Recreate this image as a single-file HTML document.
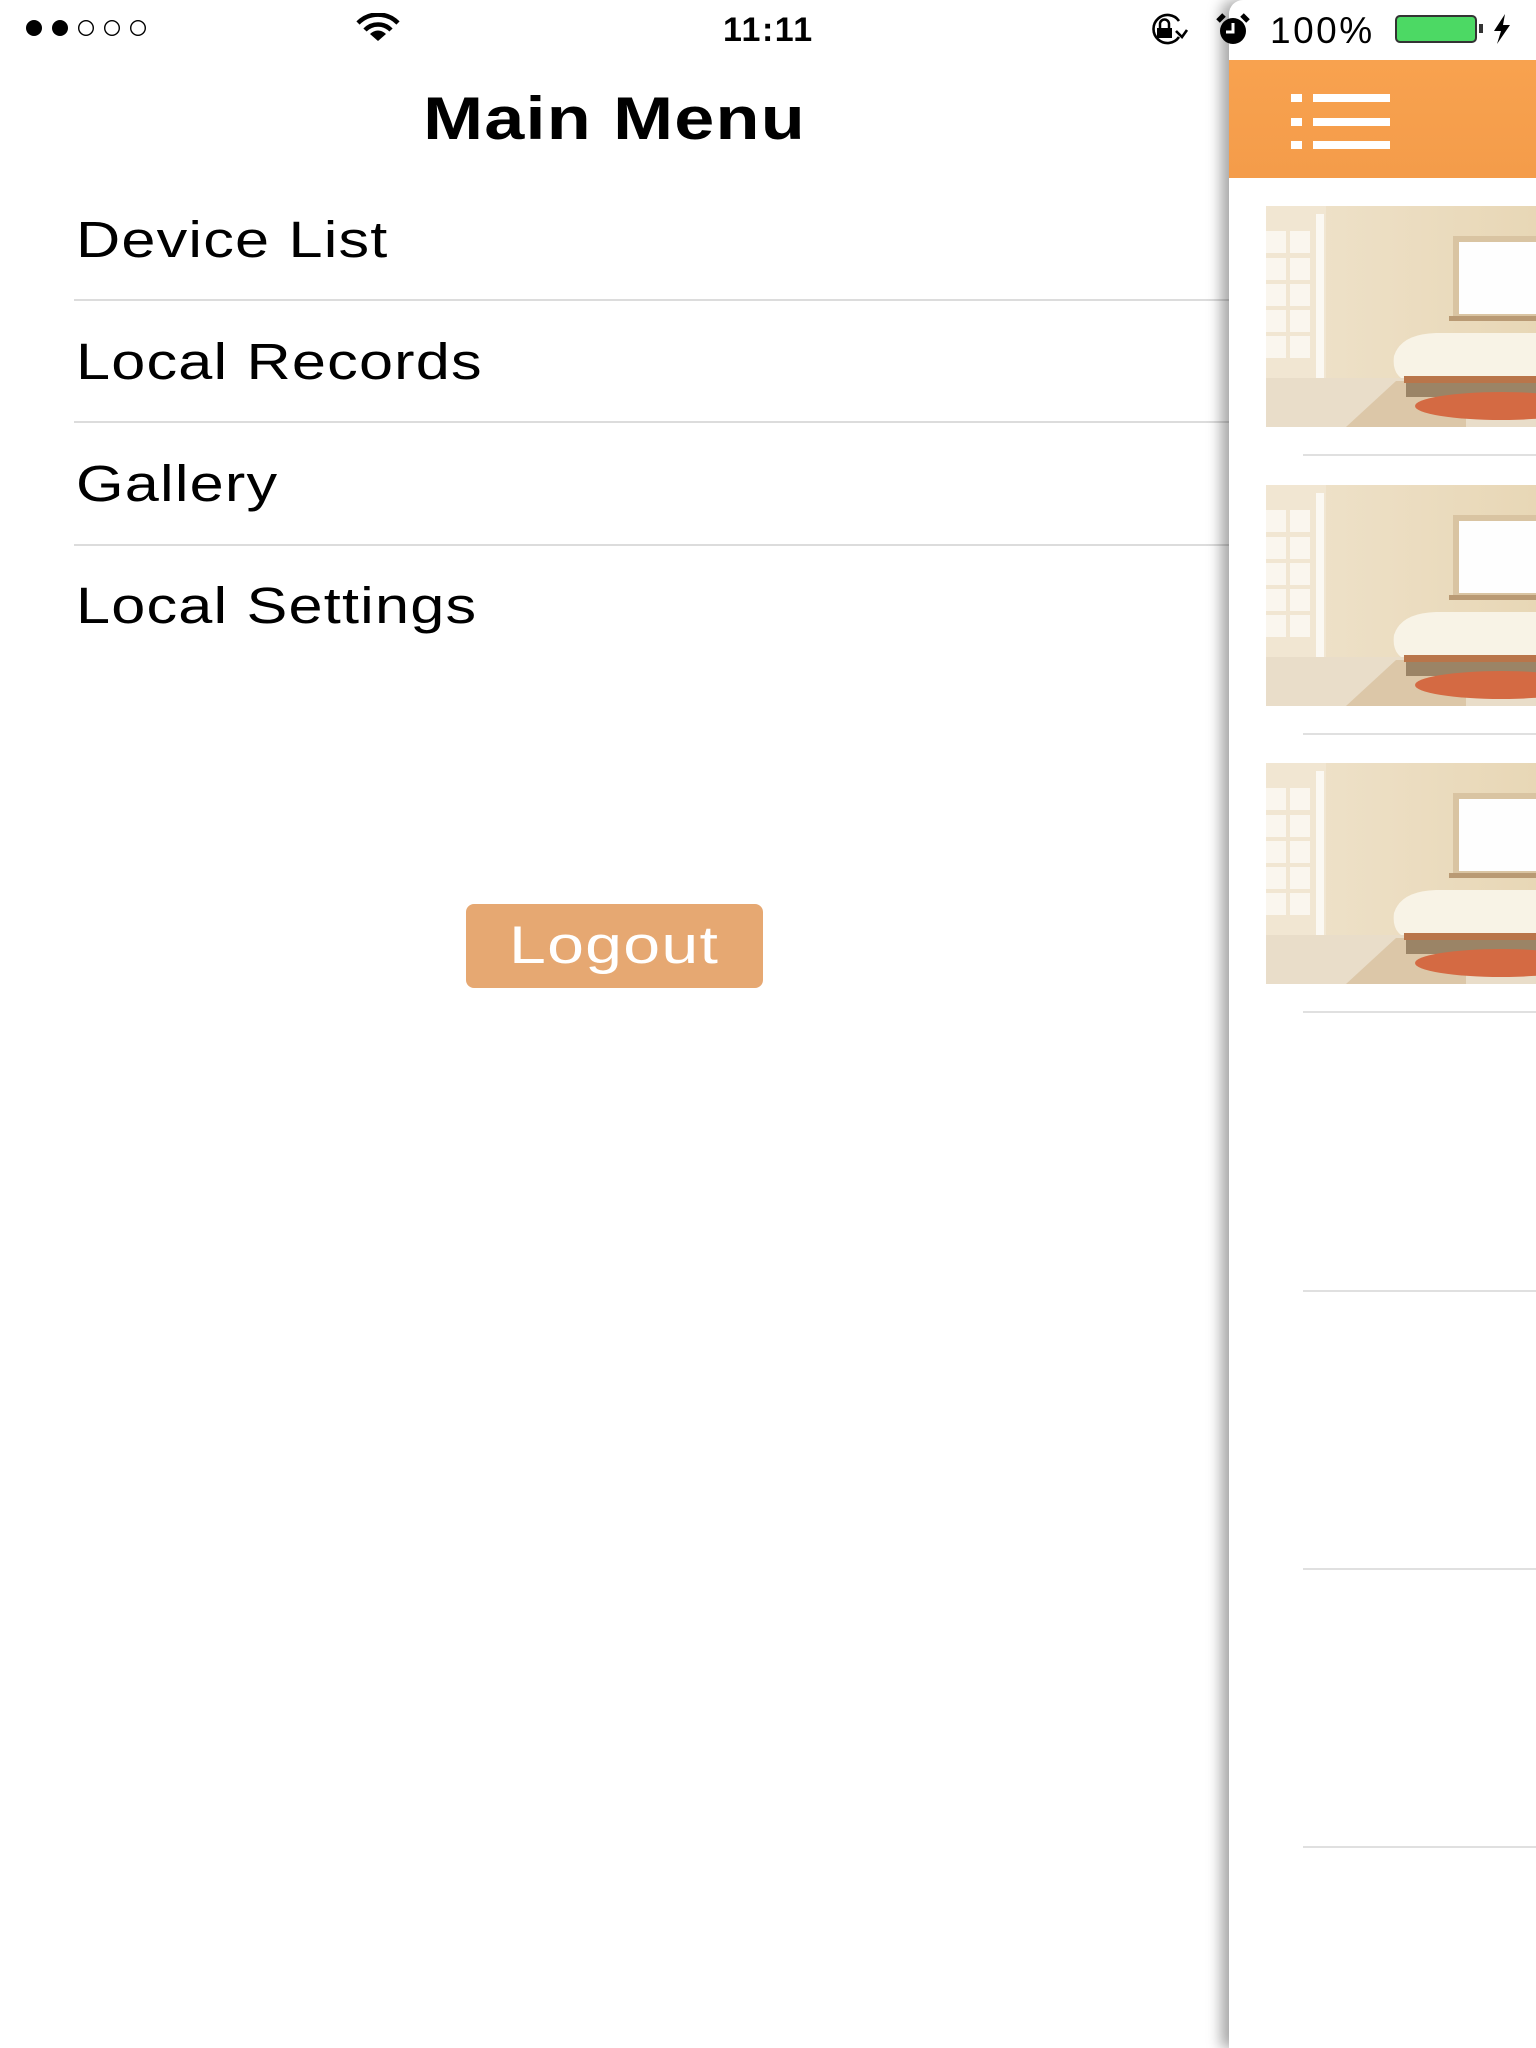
<!DOCTYPE html>
<html><head><meta charset="utf-8"><style>
*{margin:0;padding:0;box-sizing:border-box}
body{width:1536px;height:2048px;background:#fff;position:relative;overflow:hidden;font-family:"Liberation Sans",Arial,sans-serif;color:#000}
.abs{position:absolute}
.item{position:absolute;left:76px;font-size:51px;line-height:1;letter-spacing:1px;transform:scaleX(1.2);transform-origin:0 0;white-space:nowrap}
.sep{position:absolute;left:74px;width:1160px;height:2px;background:#dcdcdc}
.panel{position:absolute;left:1229px;top:0;width:320px;height:2048px;background:#fff;border-top-left-radius:14px;box-shadow:-8px 0 14px rgba(0,0,0,0.35)}
.psep{position:absolute;left:74px;width:260px;height:2px;background:#e0e0e0}
.img{position:absolute;left:37px;width:270px;height:221px}
</style></head><body>
<svg class="abs" style="left:24px;top:19px" width="128" height="18" viewBox="0 0 128 18">
<circle cx="10" cy="9" r="8" fill="#000"/><circle cx="36" cy="9" r="8" fill="#000"/>
<circle cx="62" cy="9" r="7.3" fill="none" stroke="#000" stroke-width="1.4"/>
<circle cx="88" cy="9" r="7.3" fill="none" stroke="#000" stroke-width="1.4"/>
<circle cx="114" cy="9" r="7.3" fill="none" stroke="#000" stroke-width="1.4"/>
</svg>
<svg class="abs" style="left:355px;top:13px" width="46" height="30" viewBox="0 0 46 30">
<path d="M3 10 A28 28 0 0 1 43 10" fill="none" stroke="#000" stroke-width="4.5"/>
<path d="M10 17 A18 18 0 0 1 36 17" fill="none" stroke="#000" stroke-width="4.5"/>
<path d="M23 28 L15 21 A11 11 0 0 1 31 21 Z" fill="#000"/>
</svg>
<div class="abs" style="left:723px;top:11px;font-size:34px;font-weight:bold;letter-spacing:1.5px">11:11</div>
<svg class="abs" style="left:1145px;top:13px" width="44" height="32" viewBox="0 0 44 32">
<path d="M34 8 A14 14 0 1 0 34 24" fill="none" stroke="#000" stroke-width="2.6"/>
<path d="M31 18 L37 24 L42 17" fill="none" stroke="#000" stroke-width="2.6"/>
<rect x="12" y="15" width="15" height="10" fill="#000"/>
<path d="M15 15 V11 A4.5 4.5 0 0 1 24 11 V15" fill="none" stroke="#000" stroke-width="2.5"/>
</svg>
<div class="item" style="top:214px">Device List</div>
<div class="sep" style="top:299px"></div>
<div class="item" style="top:336px">Local Records</div>
<div class="sep" style="top:421px"></div>
<div class="item" style="top:458px">Gallery</div>
<div class="sep" style="top:544px"></div>
<div class="item" style="top:580px">Local Settings</div>
<div class="abs" style="left:0;width:1229px;top:84px;text-align:center;"><span style="display:inline-block;font-size:60px;font-weight:bold;letter-spacing:1px;transform:scaleX(1.2)">Main Menu</span></div>
<div class="abs" style="left:466px;top:904px;width:297px;height:84px;background:#e6a872;border-radius:8px;color:#fff;text-align:center;line-height:84px"><span style="display:inline-block;font-size:53px;letter-spacing:1px;transform:scaleX(1.25)">Logout</span></div>

<div class="panel">
<div class="abs" style="left:0;top:60px;width:320px;height:118px;background:linear-gradient(#f8a24f,#f49c4a)"></div>
<svg class="abs" style="left:62px;top:94px" width="100" height="58" viewBox="0 0 100 58">
<g fill="#fff"><rect x="0" y="0" width="11" height="8"/><rect x="22" y="0" width="77" height="8"/>
<rect x="0" y="24" width="11" height="8"/><rect x="22" y="24" width="77" height="8"/>
<rect x="0" y="47" width="11" height="8"/><rect x="22" y="47" width="77" height="8"/></g>
</svg>
<svg class="abs" style="left:-16px;top:12px" width="40" height="34" viewBox="0 0 40 34">
<circle cx="20" cy="19" r="13" fill="#000"/><path d="M5 9 L11 3 M35 9 L29 3" stroke="#000" stroke-width="5"/>
<path d="M20 11 V20 H13" fill="none" stroke="#fff" stroke-width="3"/>
</svg>
<div class="abs" style="left:41px;top:10px;font-size:37px;letter-spacing:2.5px">100%</div>
<div class="abs" style="left:166px;top:15px;width:82px;height:28px;border:2px solid #333;border-radius:5px;background:#4cd964"></div>
<div class="abs" style="left:250px;top:24px;width:4px;height:9px;background:#333"></div>
<svg class="abs" style="left:262px;top:14px" width="22" height="30" viewBox="0 0 22 30"><path d="M14 0 L3 17 H10 L6 30 L19 11 H12 Z" fill="#000"/></svg>

<svg width="0" height="0" style="position:absolute"><defs>
<linearGradient id="wall" x1="0" x2="1"><stop offset="0" stop-color="#efe3cc"/><stop offset="1" stop-color="#e8d7b6"/></linearGradient>
<symbol id="room" viewBox="0 0 270 221">
<rect width="270" height="221" fill="url(#wall)"/>
<rect x="0" y="0" width="60" height="176" fill="#f1e6d2"/>
<g fill="#faf6ee"><rect x="0" y="25" width="20" height="22"/><rect x="24" y="25" width="20" height="22"/>
<rect x="0" y="52" width="20" height="22"/><rect x="24" y="52" width="20" height="22"/>
<rect x="0" y="78" width="20" height="22"/><rect x="24" y="78" width="20" height="22"/>
<rect x="0" y="104" width="20" height="22"/><rect x="24" y="104" width="20" height="22"/>
<rect x="0" y="130" width="20" height="22"/><rect x="24" y="130" width="20" height="22"/></g>
<rect x="50" y="8" width="8" height="170" fill="#fbf8f2"/>
<rect x="187" y="30" width="90" height="84" fill="#d9c4a2"/>
<rect x="193" y="36" width="80" height="72" fill="#fefefe"/>
<rect x="183" y="110" width="90" height="5" fill="#b99a74"/>
<rect x="0" y="172" width="270" height="49" fill="#e9ddc9"/>
<path d="M80 221 L130 175 L200 175 L200 221 Z" fill="#dcc7a8"/>
<path d="M128 150 Q135 128 170 127 L270 127 L270 172 L135 172 Q126 165 128 150Z" fill="#f8f3e6"/>
<rect x="138" y="170" width="132" height="7" fill="#b9754a"/>
<rect x="140" y="177" width="130" height="14" fill="#9b8466"/>
<ellipse cx="235" cy="200" rx="86" ry="14" fill="#d46a43"/>
</symbol></defs></svg>
<svg class="img" style="top:206px"><use href="#room"/></svg>
<div class="psep" style="top:454px"></div>
<svg class="img" style="top:485px"><use href="#room"/></svg>
<div class="psep" style="top:733px"></div>
<svg class="img" style="top:763px"><use href="#room"/></svg>
<div class="psep" style="top:1011px"></div>
<div class="psep" style="top:1290px"></div>
<div class="psep" style="top:1568px"></div>
<div class="psep" style="top:1846px"></div>
</div>
</body></html>
